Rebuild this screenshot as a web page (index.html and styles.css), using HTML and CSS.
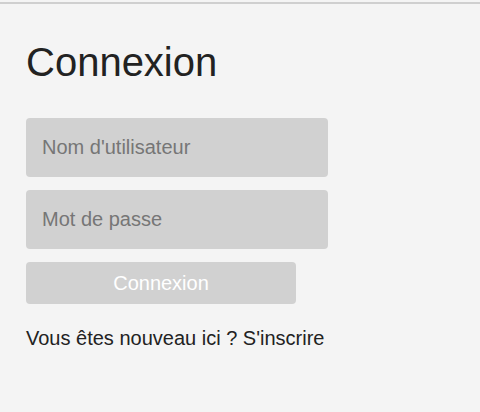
FILE: index.html
```html
<!DOCTYPE html>
<html lang="fr">
<head>
<meta charset="utf-8">
<title>Connexion</title>
<link rel="stylesheet" href="styles.css">
</head>
<body>
<main class="page">
  <h1 class="title">Connexion</h1>
  <form class="form">
    <input class="field" type="text" placeholder="Nom d'utilisateur">
    <input class="field" type="password" placeholder="Mot de passe">
    <button class="submit" type="button">Connexion</button>
  </form>
  <p class="signup">Vous êtes nouveau ici ? <a class="signup-link" href="#">S'inscrire</a></p>
</main>
</body>
</html>
```
FILE: styles.css
```css
html, body {
  margin: 0;
  padding: 0;
  background: #f4f4f4;
}
body {
  padding-top: 2px;
  font-family: "Liberation Sans", Arial, sans-serif;
  color: #222222;
}
.page {
  border-top: 2px solid #cfcfcf;
  padding: 35px 26px 40px;
  min-height: 330px;
}
.title {
  margin: 0;
  font-size: 40px;
  font-weight: normal;
  line-height: 46px;
  color: #222222;
}
.form {
  margin-top: 33px;
  display: flex;
  flex-direction: column;
  align-items: flex-start;
  gap: 13px;
}
.field {
  box-sizing: border-box;
  width: 302px;
  height: 59px;
  border: none;
  border-radius: 4px;
  background: #d1d1d1;
  padding: 0 16px;
  font-family: "Liberation Sans", Arial, sans-serif;
  font-size: 20px;
  color: #222222;
  outline: none;
}
.field::placeholder {
  color: #767676;
  opacity: 1;
}
.submit {
  box-sizing: border-box;
  width: 270px;
  height: 42px;
  border: none;
  border-radius: 4px;
  background: #d1d1d1;
  color: #ffffff;
  font-family: "Liberation Sans", Arial, sans-serif;
  font-size: 20px;
  padding: 0;
}
.signup {
  margin: 23px 0 0;
  font-size: 20px;
  line-height: 23px;
}
.signup-link {
  color: inherit;
  text-decoration: none;
}
```
